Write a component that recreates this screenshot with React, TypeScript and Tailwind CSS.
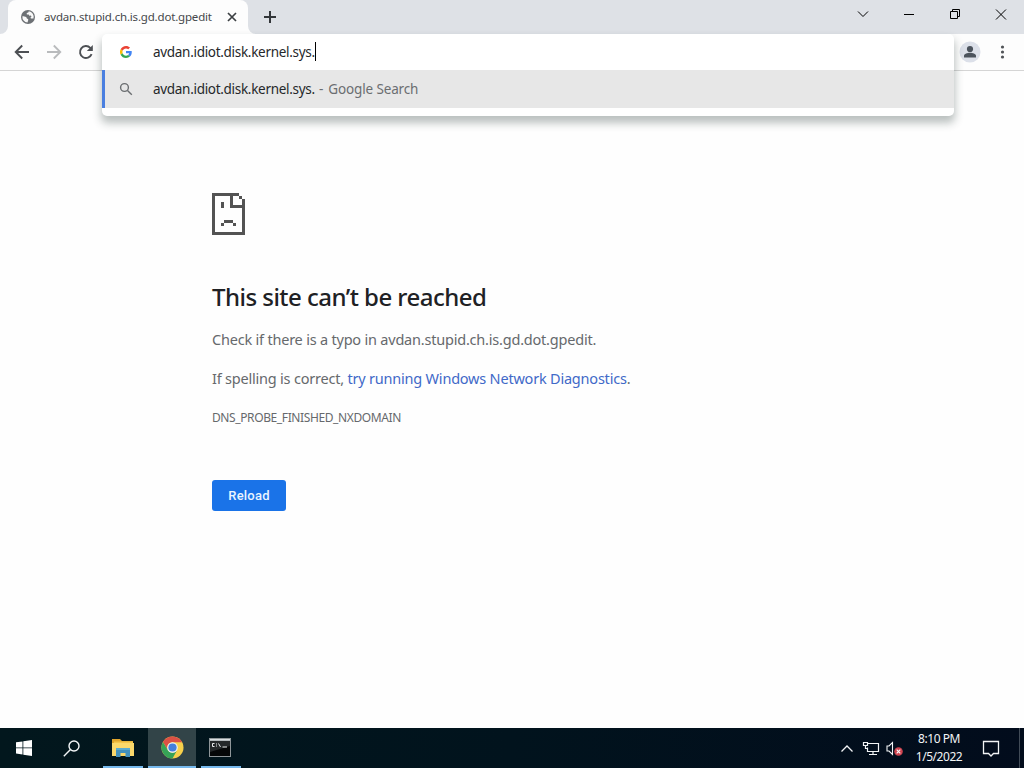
import type { ReactNode } from "react"

const WindowControls = () => (
  <div className="ml-auto flex h-[29px] text-black">
    <svg className="h-[29px] w-[46px]" viewBox="0 0 46 29" fill="none" stroke="currentColor">
      <path d="M18 11.5l5 5 5-5" />
    </svg>
    <svg className="h-[29px] w-[46px]" viewBox="0 0 46 29" fill="none" stroke="currentColor">
      <path d="M18 14.5h10" />
    </svg>
    <svg className="h-[29px] w-[46px]" viewBox="0 0 46 29" fill="none" stroke="currentColor">
      <path d="M18.5 11.5h7v7h-7zM20.5 11.5v-2h7v7h-2" />
    </svg>
    <svg className="h-[29px] w-[46px]" viewBox="0 0 46 29" fill="none" stroke="currentColor">
      <path d="M18 9.5l10 10m0-10l-10 10" />
    </svg>
  </div>
)

const TabStrip = () => (
  <div className="flex h-[34px] bg-[#dee1e6]">
    <div className="flex w-2 items-end bg-[#dee1e6]">
      <svg className="size-2 text-[#fdfdfd]" viewBox="0 0 8 8" fill="currentColor">
        <path d="M8 0v8H0a8 8 0 0 0 8-8z" />
      </svg>
    </div>
    <div className="flex w-[240px] items-center rounded-t-lg bg-[#fdfdfd] pl-3">
      <svg className="size-4 shrink-0" viewBox="0 0 16 16">
        <circle cx="8" cy="8" r="7" fill="#6d7175" />
        <path
          d="M2.4 7.2c1.4.2 2.7.1 3.7.8.8.6.3 1.5 1.3 1.8 1 .3 1 1 .7 1.8l-.6 2A5.8 5.8 0 0 1 2.4 7.2z"
          fill="#f8f8f8"
        />
        <path
          d="M8.8 2.3l-.5 1.2-1.6.4.2 1.5 1.8.2.6 1.2 1.5-.2.7.9-1 1 .4 1h2.6a5.8 5.8 0 0 0-4.7-7.2z"
          fill="#f8f8f8"
        />
      </svg>
      <span className="ml-2 w-[170px] text-[11.5px] leading-4 tracking-[-0.18px] whitespace-nowrap text-[#45484b]">
        avdan.stupid.ch.is.gd.dot.gpedit
      </span>
      <svg className="ml-3 size-3 shrink-0" viewBox="0 0 12 12" stroke="#3c4043" strokeWidth="1.7">
        <path d="M2 2l8 8m0-8l-8 8" />
      </svg>
    </div>
    <div className="flex w-2 items-end">
      <svg className="size-2 text-[#fdfdfd]" viewBox="0 0 8 8" fill="currentColor">
        <path d="M0 0v8h8a8 8 0 0 1-8-8z" />
      </svg>
    </div>
    <svg className="mt-[10px] ml-[7px] size-[14px]" viewBox="0 0 14 14" stroke="#33363a" strokeWidth="2">
      <path d="M7 1v12M1 7h12" />
    </svg>
    <WindowControls />
  </div>
)

const GoogleLogo = () => (
  <svg className="size-3" viewBox="0 0 48 48">
    <path fill="#EA4335" d="M24 9.5c3.5 0 6.7 1.2 9.2 3.6l6.9-6.9C35.9 2.4 30.5 0 24 0 14.6 0 6.5 5.4 2.6 13.2l8 6.2C12.4 13.7 17.7 9.5 24 9.5z" />
    <path fill="#4285F4" d="M47 24.5c0-1.6-.2-3.1-.4-4.5H24v9h12.9c-.6 3-2.2 5.5-4.7 7.2l7.7 6C44.4 38 47 31.8 47 24.5z" />
    <path fill="#FBBC05" d="M10.5 28.6a14.5 14.5 0 0 1 0-9.2l-8-6.2a24 24 0 0 0 0 21.6z" />
    <path fill="#34A853" d="M24 48c6.5 0 11.9-2.1 15.9-5.8l-7.7-6c-2.2 1.5-4.9 2.3-8.2 2.3-6.3 0-11.6-4.2-13.5-9.9l-8 6.2C6.5 42.6 14.6 48 24 48z" />
  </svg>
)

const Omnibox = () => (
  <div className="absolute top-0 left-[102px] z-10 h-[82px] w-[852px] rounded-[5px] bg-white shadow-[0_6px_9px_1px_rgba(30,50,45,0.3)]">
    <div className="flex h-9 items-center pl-[18px]">
      <GoogleLogo />
      <span className="ml-[21px] w-[162px] text-[13.5px] leading-5 tracking-[-0.3px] whitespace-nowrap text-[#25272a]">
        avdan.idiot.disk.kernel.sys.
      </span>
      <span className="-mt-0.5 h-[19px] w-px bg-black" />
    </div>
    <div className="flex h-[38px] items-center border-l-[3px] border-[#4a7fe0] bg-[#e7e7e7] pl-[14px]">
      <svg className="size-[14px] shrink-0" viewBox="0 0 14 14" fill="none" stroke="#6a6d70" strokeWidth="1.4">
        <circle cx="5.5" cy="5.5" r="3.9" />
        <path d="M8.5 8.5l4.3 4.3" />
      </svg>
      <span className="ml-5 w-[162px] text-[13.5px] leading-5 tracking-[-0.3px] whitespace-nowrap text-[#25272a]">
        avdan.idiot.disk.kernel.sys.
      </span>
      <span className="ml-1 flex gap-[5px] text-[13.5px] leading-5 tracking-[-0.13px] whitespace-nowrap text-[#6b6e71]">
        <span>-</span>
        <span>Google Search</span>
      </span>
    </div>
  </div>
)

const Toolbar = () => (
  <div className="relative flex h-[37px] items-center border-b border-[#d5d5d5] bg-[#fdfdfd] pl-[14px]">
    <svg className="size-4" viewBox="0 0 16 16" fill="none" stroke="#4d5054" strokeWidth="1.9">
      <path d="M15 8H2M8.2 1.5L1.7 8l6.5 6.5" />
    </svg>
    <svg className="ml-4 size-4" viewBox="0 0 16 16" fill="none" stroke="#b9bbbd" strokeWidth="1.8">
      <path d="M1 8h13M7.8 1.5L14.3 8l-6.5 6.5" />
    </svg>
    <svg className="ml-4 size-4" viewBox="0 0 16 16" fill="none" stroke="#4d5054" strokeWidth="1.9">
      <path d="M13.6 10.2A6 6 0 1 1 12.3 3.8l1.5 1.5" />
      <path d="M14.8 1v6H8.8z" fill="#4d5054" stroke="none" />
    </svg>
    <Omnibox />
    <div className="ml-auto flex items-center pr-[15px]">
      <svg className="size-[22px]" viewBox="0 0 22 22">
        <circle cx="11" cy="11" r="10.5" fill="#dce0e9" />
        <circle cx="11" cy="8" r="3.1" fill="#4c535d" />
        <path d="M5 16.5v-1.7c0-2 3.5-3 6-3s6 1 6 3v1.7z" fill="#4c535d" />
      </svg>
      <svg className="ml-[15px] h-4 w-[13px]" viewBox="0 0 13 16" fill="#505357">
        <circle cx="6.5" cy="3" r="1.6" />
        <circle cx="6.5" cy="8" r="1.6" />
        <circle cx="6.5" cy="13" r="1.6" />
      </svg>
    </div>
  </div>
)

const ErrorPage = () => (
  <div className="flex-1 bg-[#fefefe] pl-[212px]">
    <svg className="mt-[122px] h-[42px] w-[33px]" viewBox="0 0 11 14" fill="#535353" shapeRendering="crispEdges">
      <path d="M0 0h9v1H7v3h4v10H0zM1 1v12h9V5H6V1z" fillRule="evenodd" />
      <path d="M9 1h1v1H9zM10 2h1v2h-1zM3 3h1v2H3zM4 9h3v1H4zM3 10h1v1H3zM7 10h1v1H7z" />
    </svg>
    <h1 className="mt-[46px] text-[24px] leading-8 font-medium tracking-[-0.53px] whitespace-nowrap text-[#202124]">
      This site can’t be reached
    </h1>
    <p className="mt-[14px] text-[14.5px] leading-6 tracking-[-0.21px] whitespace-nowrap text-[#66696c]">
      Check if there is a typo in avdan.stupid.ch.is.gd.dot.gpedit.
    </p>
    <p className="mt-[15px] text-[14.5px] leading-6 tracking-[-0.21px] whitespace-nowrap text-[#66696c]">
      If spelling is correct, <a className="text-[#4169c8]">try running Windows Network Diagnostics</a>.
    </p>
    <p className="mt-[18px] text-[12px] leading-5 tracking-[-0.39px] whitespace-nowrap text-[#66696c]">
      DNS_PROBE_FINISHED_NXDOMAIN
    </p>
    <button className="mt-[52px] flex h-[31px] w-[74px] items-center justify-center rounded-[3px] bg-[#1a73e8] font-['Roboto'] text-[13px] font-medium tracking-[0.2px] text-[#eaf5ff]">
      Reload
    </button>
  </div>
)

type TaskProps = {
  children: ReactNode
  className: string
}

const Task = ({ children, className }: TaskProps) => (
  <div className={`flex items-center justify-center border-[#76b9ed] ${className}`}>{children}</div>
)

const Taskbar = () => (
  <div className="flex h-10 bg-linear-to-r from-[#02171d] via-[#01131d] to-[#020c1c]">
    <Task className="w-12">
      <svg className="size-4" viewBox="0 0 16 16" fill="#fff">
        <path d="M0 2.3l6.5-.9v6.1H0zM7.3 1.3L16 0v7.5H7.3zM0 8.3h6.5v6.1L0 13.5zM7.3 8.3H16V16l-8.7-1.3z" />
      </svg>
    </Task>
    <Task className="w-12 pr-px">
      <svg className="size-[17px]" viewBox="0 0 17 17" fill="none" stroke="#f3f6f7" strokeWidth="1.4">
        <circle cx="11" cy="6" r="5" />
        <path d="M7.5 9.5L.8 16.3" />
      </svg>
    </Task>
    <Task className="ml-[7px] w-10 border-b-2">
      <svg className="mt-px h-[19px] w-[22px]" viewBox="0 0 22 19">
        <path d="M0 1h8l2 2h11v4H0z" fill="#e0a52c" />
        <path d="M2 3.5h19v3H2z" fill="#f3c64c" />
        <path d="M0 5h22v13H0z" fill="#fad86b" />
        <path d="M4 10h14v9h-4.5v-4h-5v4H4z" fill="#4391bd" />
        <path d="M4 10h14v2H4z" fill="#5aabd0" />
      </svg>
    </Task>
    <Task className="ml-[5px] w-12 border-b-2 bg-[#324448]">
      <svg className="mt-px size-[23px]" viewBox="0 0 24 24">
        <circle cx="12" cy="12" r="11.5" fill="#f8d04b" />
        <path d="M12 6.5h10.1A11.5 11.5 0 0 0 2.04 6.25L7.24 14.75A5.5 5.5 0 0 1 12 6.5z" fill="#dc5145" />
        <path d="M2.04 6.25A11.5 11.5 0 0 0 12 23.5L16.76 14.75A5.5 5.5 0 0 1 7.24 14.75z" fill="#36a357" />
        <circle cx="12" cy="12" r="5.5" fill="#eef3f7" />
        <circle cx="12" cy="12" r="4.3" fill="#457fdc" />
      </svg>
    </Task>
    <Task className="ml-[5px] w-10 border-b-2 pr-0.5">
      <svg className="h-[19px] w-[22px]" viewBox="0 0 22 19">
        <path d="M0 0h22v19H0z" fill="#8f9699" />
        <path d="M1 1h20v1.5H1z" fill="#d9dfe1" />
        <path d="M1 3h20v15H1z" fill="#050708" />
        <path d="M1 3h20v5L1 14z" fill="#24282a" />
        <path
          d="M5.5 5.5H3.5v3h2M7.5 5.5v1M7.5 7.5v1M9.5 5.5l2 3.5M13.5 9h4.5"
          fill="none"
          stroke="#e6e9ea"
        />
      </svg>
    </Task>
    <div className="ml-auto flex items-center text-[#f2f4f6]">
      <svg className="h-[9px] w-[14px]" viewBox="0 0 14 9" fill="none" stroke="currentColor" strokeWidth="1.3">
        <path d="M1.5 7.5L7 2l5.5 5.5" />
      </svg>
      <svg className="ml-2 h-[15px] w-[18px]" viewBox="0 0 18 15" fill="none" stroke="currentColor" strokeWidth="1.2">
        <path d="M6 2.5h10.5v8h-11V6.5M11 10.5v3M7 13.5h8" />
        <path d="M1.5 1.5h4v3h-4zM3.5 4.5v3h2" />
      </svg>
      <svg className="ml-1.5 h-[15px] w-[17px]" viewBox="0 0 17 15" fill="none">
        <path d="M1 5h2l3.5-3.5v12L3 10H1z" stroke="currentColor" strokeWidth="1.1" />
        <circle cx="12.5" cy="10.5" r="4.3" fill="#ce4450" />
        <path d="M10.7 8.7l3.6 3.6m0-3.6l-3.6 3.6" stroke="#fff" strokeWidth="1.1" />
      </svg>
      <div className="ml-[5px] flex w-[62px] flex-col text-center text-[12px] leading-[18px] tracking-[-0.45px] whitespace-nowrap">
        <span>8:10 PM</span>
        <span>1/5/2022</span>
      </div>
      <svg className="ml-3 h-[17px] w-[18px]" viewBox="0 0 18 17" fill="none" stroke="currentColor" strokeWidth="1.3">
        <path d="M1.5 1.5h15v12h-5L9 16l-2.5-2.5h-5z" />
      </svg>
      <div className="ml-[19px] h-10 w-[5px] border-l border-[#414b57]" />
    </div>
  </div>
)

const App = () => (
  <div className="flex h-screen w-screen flex-col overflow-hidden bg-white font-['Noto_Sans','Open_Sans',sans-serif]">
    <TabStrip />
    <Toolbar />
    <ErrorPage />
    <Taskbar />
  </div>
)

export default App
